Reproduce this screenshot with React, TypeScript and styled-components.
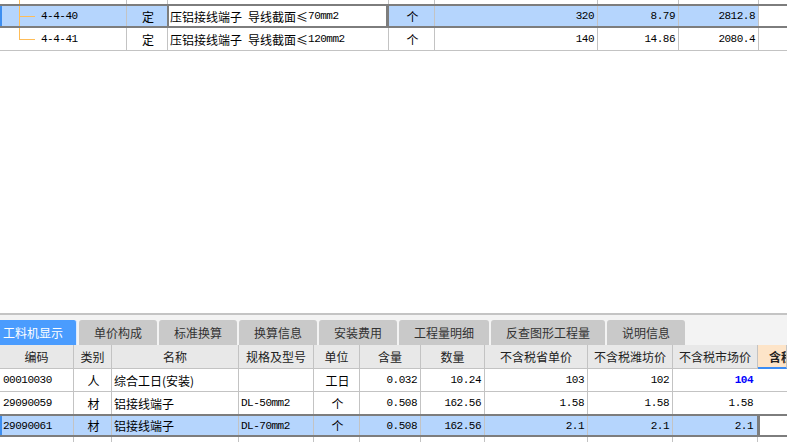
import React from 'react';
import styled, { createGlobalStyle } from 'styled-components';

const GlobalStyle = createGlobalStyle`
  html, body {
    margin: 0;
    padding: 0;
    background: #ffffff;
  }
  body {
    font-family: "Noto Sans CJK SC", "Noto Sans", sans-serif;
    font-size: 12px;
    color: #000000;
  }
`;

const Page = styled.div`
    width: 787px;
    height: 442px;
    overflow: hidden;
    display: flex;
    flex-direction: column;
    background: #ffffff;
`;

interface RowProps {
    $cols: string;
    $h: number;
    $sel?: boolean;
    $line?: boolean;
    $overlap?: boolean;
}
const Row = styled.div<RowProps>`
    display: grid;
    grid-template-columns: ${p => p.$cols};
    height: ${p => p.$h}px;
    flex-shrink: 0;
    box-sizing: border-box;
    border-bottom: ${p => (p.$line ? '1px solid #c3c3c3' : 'none')};
    ${p => p.$sel && `
        border-top: 2px solid #7d7d7d;
        border-bottom: 2px solid #7d7d7d;
        background: #b5d5fd;
        box-shadow: inset 2px 0 0 #3d8ef0;
    `}
    margin-top: ${p => (p.$overlap ? '-1px' : '0')};
`;
const FillRow = styled(Row)`
    flex: 1;
    height: auto;
`;

interface CellProps {
    $align?: 'left' | 'center' | 'right';
    $edit?: boolean;
    $blank?: boolean;
}
const Cell = styled.div<CellProps>`
    display: flex;
    align-items: center;
    justify-content: ${p => p.$align === 'right' ? 'flex-end' : p.$align === 'center' ? 'center' : 'flex-start'};
    padding: ${p => p.$align === 'right' ? '0 3px 0 0' : '0 0 0 2px'};
    border-right: 1px solid #c3c3c3;
    box-sizing: border-box;
    overflow: hidden;
    white-space: nowrap;
    min-width: 0;
    ${p => p.$edit && `
        background: #ffffff;
        margin-left: -1px;
        border-left: 2px solid #7d7d7d;
        border-right: 3px solid #7d7d7d;
    `}
    ${p => p.$blank && `
        background: #ffffff;
        border-right: none;
    `}
`;
const TailCell = styled.div<{ $sel?: boolean }>`
    background: #ffffff;
    margin-left: -1px;
    border-left: ${p => (p.$sel ? '3px solid #7d7d7d' : 'none')};
`;
const TreeCell = styled(Cell)`
    padding: 0;
    align-items: stretch;
`;
const CodeText = styled.span`
    display: flex;
    align-items: center;
    margin-left: 3px;
`;

const Num = styled.span<{ $strong?: boolean }>`
    font-family: "Liberation Mono", "DejaVu Sans Mono", monospace;
    font-size: 11px;
    letter-spacing: -0.5px;
    font-weight: ${p => (p.$strong ? 700 : 400)};
    color: ${p => (p.$strong ? '#0000ff' : '#000000')};
`;

const Gap = styled.span`
    display: inline-block;
    width: 6px;
`;

const Spacer = styled.div`
    flex: 1;
`;

const Bottom = styled.div`
    display: flex;
    flex-direction: column;
    height: 129px;
    flex-shrink: 0;
`;

const TabBar = styled.div`
    display: flex;
    align-items: flex-end;
    gap: 2px;
    height: 30px;
    flex-shrink: 0;
    background: #f3f3f3;
    border-top: 2px solid #c4c4c4;
`;
const Tab = styled.div<{ $active?: boolean; $w: number }>`
    width: ${p => p.$w}px;
    height: 25px;
    display: flex;
    align-items: center;
    justify-content: ${p => (p.$active ? 'flex-start' : 'center')};
    padding-left: ${p => (p.$active ? '3px' : '0')};
    box-sizing: border-box;
    background: ${p => (p.$active ? '#4a9cfe' : '#c9c9c9')};
    color: ${p => (p.$active ? '#ffffff' : '#333333')};
    border-radius: ${p => (p.$active ? '0 3px 0 0' : '3px 3px 0 0')};
    border-right: ${p => (p.$active ? '1px solid #d9e9ff' : 'none')};
    font-size: 12px;
`;

const HeadRow = styled.div<{ $cols: string }>`
    display: grid;
    grid-template-columns: ${p => p.$cols};
    height: 24px;
    flex-shrink: 0;
    background: #e8e8e8;
`;
const HeadCell = styled.div<{ $hot?: boolean }>`
    display: flex;
    align-items: center;
    justify-content: ${p => (p.$hot ? 'flex-start' : 'center')};
    padding-left: ${p => (p.$hot ? '11px' : '0')};
    box-sizing: border-box;
    border-right: 1px solid #c3c3c3;
    border-bottom: ${p => (p.$hot ? '2px solid #3b8cf5' : '1px solid #c3c3c3')};
    background: ${p => (p.$hot ? '#fde4c8' : 'transparent')};
    font-weight: ${p => (p.$hot ? 700 : 400)};
    color: #222222;
    white-space: nowrap;
    overflow: hidden;
`;

const TOP_COLS = '127px 41px 221px 46px 163px 81px 80px 1fr';
const LOW_COLS = '74px 38px 127px 75px 46px 61px 64px 103px 85px 85px 1fr';
const TREE = '#ffbd58';

// tree connector drawn with filled 1px rects so the lines stay crisp
function Tree({ h, kind }: { h: number; kind: 'pass' | 'mid' | 'last' }) {
    const y = kind === 'last' ? 11 : Math.floor(h / 2);
    return (
        <svg width="38" height={h} style={{ flexShrink: 0, display: 'block' }}>
            <rect x="19" y="0" width="1" height={kind === 'last' ? y + 1 : h} fill={TREE} />
            {kind !== 'pass' && <rect x="19" y={y} width="16" height="1" fill={TREE} />}
        </svg>
    );
}

const topRows = [
    { code: '4-4-40', name: '70mm2', qty: '320', price: '8.79', total: '2812.8', sel: true },
    { code: '4-4-41', name: '120mm2', qty: '140', price: '14.86', total: '2080.4', sel: false },
];

const tabs = [
    { label: '工料机显示', w: 77, active: true },
    { label: '单价构成', w: 78 },
    { label: '标准换算', w: 78 },
    { label: '换算信息', w: 78 },
    { label: '安装费用', w: 78 },
    { label: '工程量明细', w: 90 },
    { label: '反查图形工程量', w: 114 },
    { label: '说明信息', w: 78 },
];

const heads = ['编码', '类别', '名称', '规格及型号', '单位', '含量', '数量', '不含税省单价', '不含税潍坊价', '不含税市场价'];

const lowRows = [
    { code: '00010030', kind: '人', name: '综合工日(安装)', spec: '', unit: '工日', amt: '0.032', qty: '10.24', p1: '103', p2: '102', p3: '104', hot: true },
    { code: '29090059', kind: '材', name: '铝接线端子', spec: 'DL-50mm2', unit: '个', amt: '0.508', qty: '162.56', p1: '1.58', p2: '1.58', p3: '1.58' },
    { code: '29090061', kind: '材', name: '铝接线端子', spec: 'DL-70mm2', unit: '个', amt: '0.508', qty: '162.56', p1: '2.1', p2: '2.1', p3: '2.1', sel: true },
];

export default function App() {
    return (
        <Page>
            <GlobalStyle />
            <Row $cols={TOP_COLS} $h={4}>
                <TreeCell><Tree h={4} kind="pass" /></TreeCell>
                <Cell /><Cell /><Cell /><Cell /><Cell /><Cell /><Cell $blank />
            </Row>
            {topRows.map((r, i) => {
                const h = r.sel ? 20 : 22;
                return (
                    <Row key={r.code} $cols={TOP_COLS} $h={r.sel ? 24 : 23} $sel={r.sel} $line={!r.sel}>
                        <TreeCell>
                            <Tree h={h} kind={i === topRows.length - 1 ? 'last' : 'mid'} />
                            <CodeText><Num>{r.code}</Num></CodeText>
                        </TreeCell>
                        <Cell $align="center">定</Cell>
                        <Cell $edit={r.sel} style={{ paddingLeft: r.sel ? 1 : 2 }}>
                            压铝接线端子<Gap />导线截面≤<Num>{r.name}</Num>
                        </Cell>
                        <Cell $align="center">个</Cell>
                        <Cell $align="right"><Num>{r.qty}</Num></Cell>
                        <Cell $align="right"><Num>{r.price}</Num></Cell>
                        <Cell $align="right"><Num>{r.total}</Num></Cell>
                        <Cell $blank />
                    </Row>
                );
            })}
            <Spacer />
            <Bottom>
                <TabBar>
                    {tabs.map(t => (
                        <Tab key={t.label} $w={t.w} $active={t.active}>{t.label}</Tab>
                    ))}
                </TabBar>
                <HeadRow $cols={LOW_COLS}>
                    {heads.map(h => <HeadCell key={h}>{h}</HeadCell>)}
                    <HeadCell $hot>含税市场价</HeadCell>
                </HeadRow>
                {lowRows.map(r => (
                    <Row key={r.code} $cols={LOW_COLS} $h={23} $sel={r.sel} $line={!r.sel} $overlap={r.sel}>
                        <Cell style={{ paddingLeft: 3 }}><Num>{r.code}</Num></Cell>
                        <Cell $align="center">{r.kind}</Cell>
                        <Cell>{r.name}</Cell>
                        <Cell><Num>{r.spec}</Num></Cell>
                        <Cell $align="center">{r.unit}</Cell>
                        <Cell $align="right"><Num>{r.amt}</Num></Cell>
                        <Cell $align="right"><Num>{r.qty}</Num></Cell>
                        <Cell $align="right"><Num>{r.p1}</Num></Cell>
                        <Cell $align="right"><Num>{r.p2}</Num></Cell>
                        <Cell $align="right" style={{ paddingRight: 4 }}><Num $strong={r.hot}>{r.p3}</Num></Cell>
                        <TailCell $sel={r.sel} />
                    </Row>
                ))}
                <FillRow $cols={LOW_COLS} $h={0}>
                    <Cell /><Cell /><Cell /><Cell /><Cell /><Cell /><Cell /><Cell /><Cell /><Cell /><Cell $blank />
                </FillRow>
            </Bottom>
        </Page>
    );
}
